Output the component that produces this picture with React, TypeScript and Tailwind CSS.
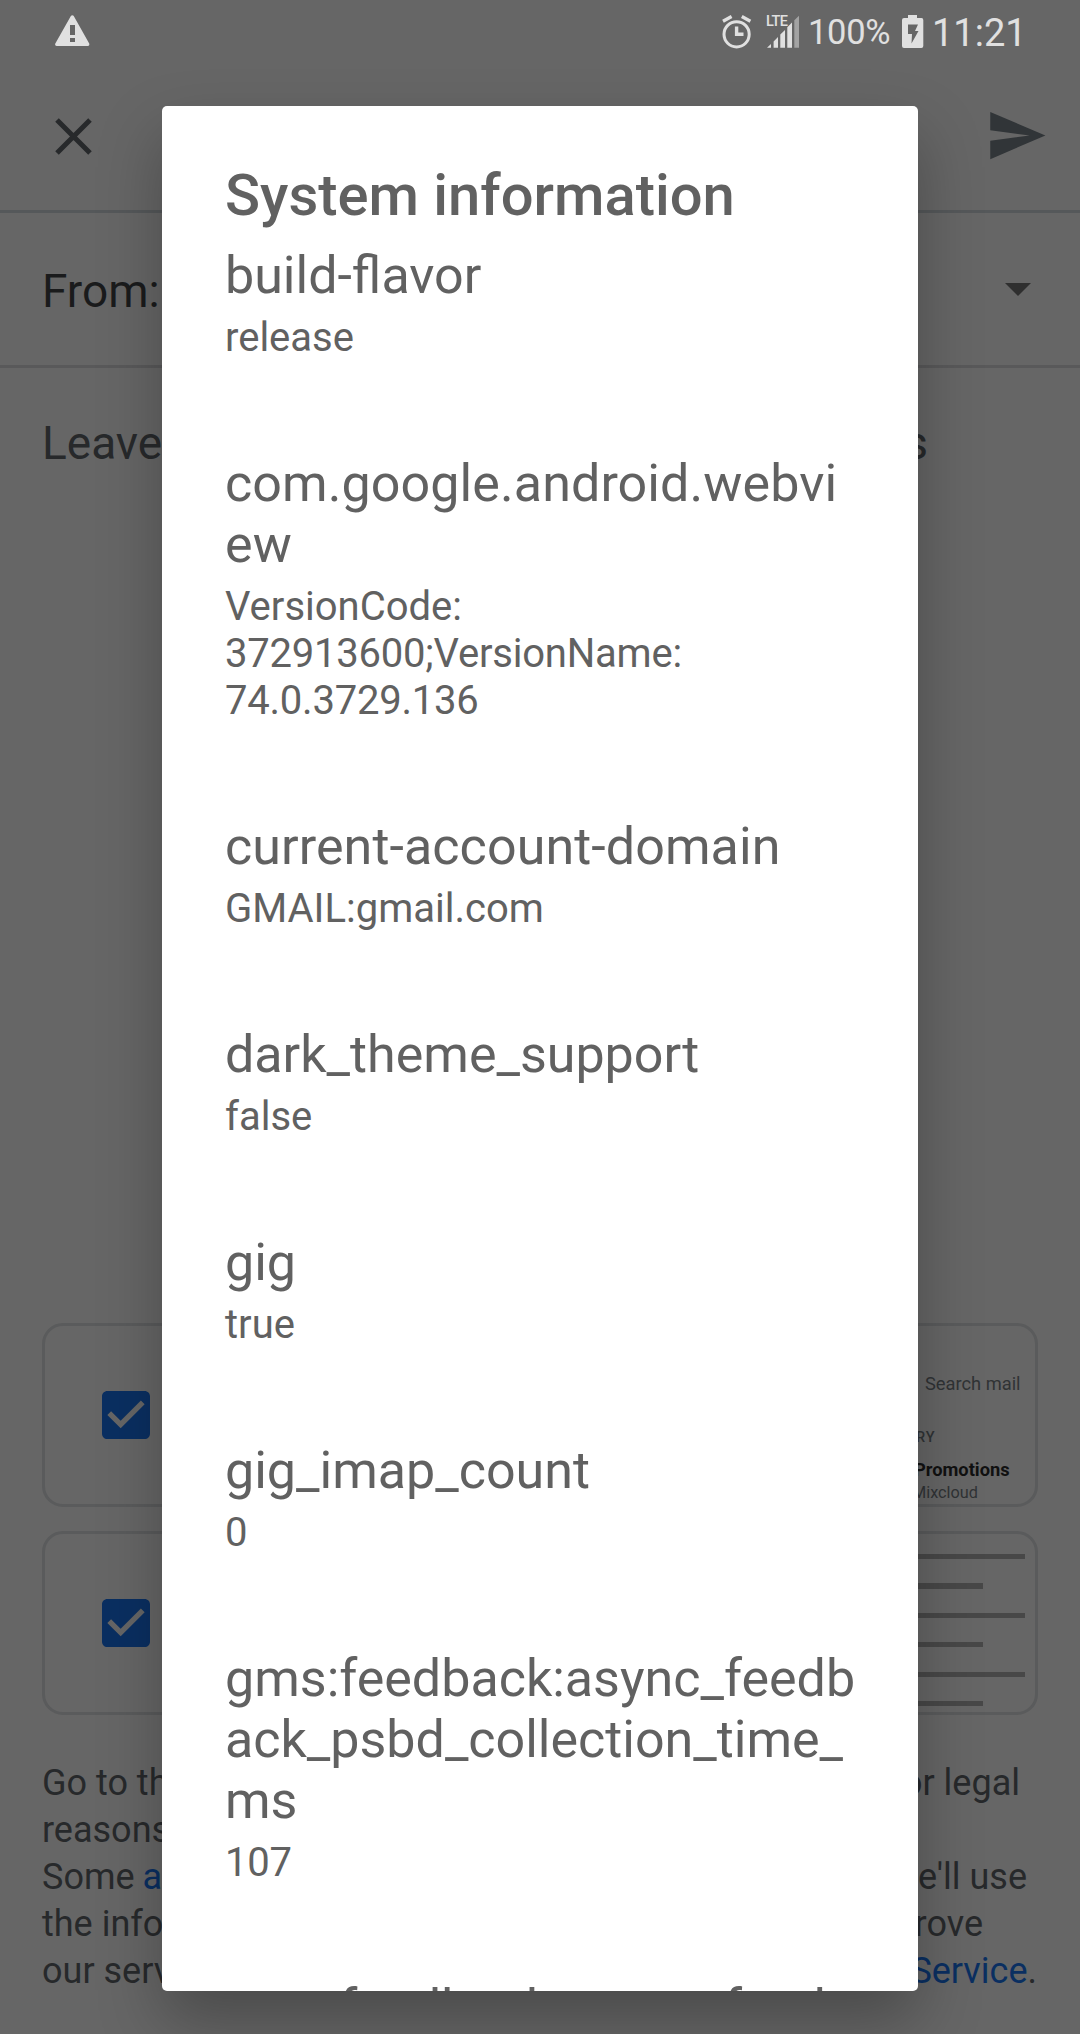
import type { ReactNode } from "react";

type Item = { name: string[]; value: string[]; spacing?: string };

const items: Item[] = [
  { name: ["build-flavor"], value: ["release"] },
  {
    name: ["com.google.android.webvi", "ew"],
    value: ["VersionCode:", "372913600;VersionName:", "74.0.3729.136"],
    spacing: "tracking-[0.09px]",
  },
  { name: ["current-account-domain"], value: ["GMAIL:gmail.com"], spacing: "tracking-[0.08px]" },
  { name: ["dark_theme_support"], value: ["false"] },
  { name: ["gig"], value: ["true"] },
  { name: ["gig_imap_count"], value: ["0"] },
  {
    name: ["gms:feedback:async_feedb", "ack_psbd_collection_time_", "ms"],
    value: ["107"],
  },
  { name: ["gms:feedback:async_feed"], value: [] },
];

function StatusBar() {
  return (
    <header className="flex h-[66px] shrink-0 items-start text-[#e0e0e0]">
      <svg className="mt-[15px] ml-[55px] h-[31px] w-[35px]" viewBox="0 0 35 31">
        <path
          fill="currentColor"
          fillRule="evenodd"
          d="M16 .8Q17.3-.5 18.6.8L34.2 28.6Q34.8 30.6 33 31H1.6Q-.3 30.6.2 28.8ZM15 10h5v10h-5ZM15 23h5v4h-5Z"
        />
      </svg>
      <svg className="mt-[15px] ml-[632px] h-[34px] w-[30px]" viewBox="0 0 30 34" fill="none" stroke="currentColor">
        <circle cx="14.6" cy="19.3" r="12.6" strokeWidth="3" />
        <path strokeWidth="3.4" d="M1 6.2 9.6 1.6M28.4 6.2 19.8 1.6" />
        <path strokeWidth="3.4" d="M14.6 11.5V19.3H21.5" />
      </svg>
      <div className="relative mt-[15px] ml-[14px] h-[33px] w-[34px]">
        <svg className="h-[33px] w-[34px]" viewBox="0 0 34 33" fill="currentColor">
          <path d="M1 32.7 5 29V32.7ZM7.6 26.4 12 22V32.7H7.6ZM14.3 19.5 19 15V32.7H14.3ZM21.3 12.3 26 7.5V32.7H21.3Z" />
          <path opacity=".5" d="M28.3 5.3 33 .8V32.7H28.3Z" />
        </svg>
        <span className="absolute top-0 left-0 text-[14.5px] leading-[14px] font-medium tracking-[-0.6px]">LTE</span>
      </div>
      <span className="mt-[11px] ml-[8px] w-[94px] text-[34.5px] leading-[42px] tracking-[-0.3px] whitespace-nowrap">
        100%
      </span>
      <svg className="mt-[15px] h-[33px] w-[22px]" viewBox="0 0 22 33">
        <path
          fill="currentColor"
          fillRule="evenodd"
          d="M6 0H15V3H19.5Q21.3 3 21.3 5V31Q21.3 33 19.3 33H2Q0 33 0 31V5Q0 3 2 3H6ZM6 9.5V19H10L9.5 28.5 16.5 16H13L16 9.5Z"
        />
      </svg>
      <span className="mt-[11px] ml-[8px] text-[38px] leading-[45px] whitespace-nowrap">11:21</span>
    </header>
  );
}

function Toolbar() {
  return (
    <div className="flex h-[147px] shrink-0 items-start justify-between border-b-[3px] border-[#55585a]">
      <svg className="mt-[52px] ml-[55px] h-[37px] w-[37px]" viewBox="0 0 37 37">
        <path d="M2 2 35 35M35 2 2 35" stroke="#27292b" strokeWidth="5" />
      </svg>
      <svg className="mt-[38px] mr-[32px] size-[63px]" viewBox="0 0 24 24" fill="#313538">
        <path d="M2.01 21L23 12 2.01 3 2 10l15 2-15 2z" />
      </svg>
    </div>
  );
}

function CheckCard({ children }: { children: ReactNode }) {
  return (
    <div className="relative h-[184px] shrink-0 overflow-hidden rounded-[21px] border-[3px] border-[#5a5b5c]">
      <svg className="mt-[65px] ml-[57px] size-[48px]" viewBox="3 3 18 18">
        <path
          fill="#0a2f61"
          d="M19 3H5c-1.11 0-2 .9-2 2v14c0 1.1.89 2 2 2h14c1.11 0 2-.9 2-2V5c0-1.1-.89-2-2-2zm-9 14l-5-5 1.41-1.41L10 14.17l7.59-7.59L19 8l-9 9z"
        />
      </svg>
      {children}
    </div>
  );
}

function LegalLine({ left, right, end }: { left: ReactNode; right?: ReactNode; end?: string }) {
  return (
    <div className={`flex justify-between whitespace-nowrap ${end ?? ""}`}>
      <span>{left}</span>
      <span>{right}</span>
    </div>
  );
}

function Compose() {
  return (
    <main className="flex h-full flex-col">
      <StatusBar />
      <Toolbar />
      <div className="flex h-[155px] shrink-0 items-start justify-between border-b-[3px] border-[#59595a] pt-[50px] pl-[42px]">
        <span className="mt-px text-[46px] leading-[54px] text-[#1a1b1c]">From:</span>
        <svg className="mt-[20px] mr-[49px] h-[13px] w-[26px]" viewBox="0 0 26 13">
          <path d="M0 0H26L13 13Z" fill="#2f2f2f" />
        </svg>
      </div>
      <div className="flex h-[955px] shrink-0 items-start justify-between pt-[48px] pr-[152px] pl-[42px] text-[46px] leading-[54px] text-[#27292b]">
        <span>Leave</span>
        <span>s</span>
      </div>
      <div className="flex flex-col gap-[24px] px-[42px]">
        <CheckCard>
          <div className="absolute top-0 left-[867px] w-[126px] whitespace-nowrap text-[#303335]">
            <div className="mt-[46px] ml-[13px] text-[18.3px] leading-[24px]">Search mail</div>
            <div className="mt-[33px] ml-[4px] text-[14.5px] leading-[18px] font-medium tracking-[1px]">RY</div>
            <div className="mt-[12px] ml-[2px] text-[18.3px] leading-[22px] font-bold text-[#111]">Promotions</div>
            <div className="mt-[2px] text-[16.3px] leading-[20px]">Mixcloud</div>
          </div>
        </CheckCard>
        <CheckCard>
          <div className="absolute top-[20px] left-[789px] flex flex-col gap-[24.2px]">
            <div className="h-[5.2px] w-[191px] bg-[#484848]" />
            <div className="h-[5.2px] w-[149px] bg-[#484848]" />
            <div className="h-[5.2px] w-[191px] bg-[#484848]" />
            <div className="h-[5.2px] w-[149px] bg-[#484848]" />
            <div className="h-[5.2px] w-[191px] bg-[#484848]" />
            <div className="h-[5.2px] w-[149px] bg-[#484848]" />
          </div>
        </CheckCard>
      </div>
      <div className="mt-[45px] pl-[42px] text-[36px] leading-[47px] text-[#27292b]">
        <LegalLine left="Go to the" right="or legal" end="pr-[60px]" />
        <LegalLine left="reasons." />
        <LegalLine left={<>Some <span className="-ml-px text-[#0a2f61]">a</span></>} right="We'll use" end="pr-[53px]" />
        <LegalLine left="the info" right="rove" end="pr-[97px]" />
        <LegalLine left="our serv" right={<><span className="text-[#0a2f61]">Service</span>.</>} end="pr-[43px]" />
      </div>
    </main>
  );
}

function InfoDialog() {
  return (
    <section
      role="dialog"
      className="absolute top-[106px] left-[162px] h-[1885px] w-[756px] overflow-hidden rounded-[5px] bg-white px-[63px] pt-[55px] text-[#616161] shadow-[0_30px_64px_rgba(0,0,0,0.28)]"
    >
      <h1 className="text-[57.9px] leading-[68px] font-medium whitespace-nowrap">System information</h1>
      <dl className="mt-[16px] flex flex-col gap-[92px]">
        {items.map((item, index) => (
          <div key={index} className="whitespace-nowrap">
            <dt className={`text-[52px] leading-[61px] ${item.spacing ?? ""}`}>
              {item.name.map((line) => (
                <div key={line}>{line}</div>
              ))}
            </dt>
            <dd className="mt-[8px] text-[40px] leading-[47px]">
              {item.value.map((line) => (
                <div key={line} className={/^\d{2}/.test(line) ? "tracking-[-0.22px]" : ""}>{line}</div>
              ))}
            </dd>
          </div>
        ))}
      </dl>
    </section>
  );
}

export default function App() {
  return (
    <div className="relative h-[2034px] w-[1080px] overflow-hidden bg-[#666666] font-['Roboto',sans-serif]">
      <Compose />
      <InfoDialog />
    </div>
  );
}
